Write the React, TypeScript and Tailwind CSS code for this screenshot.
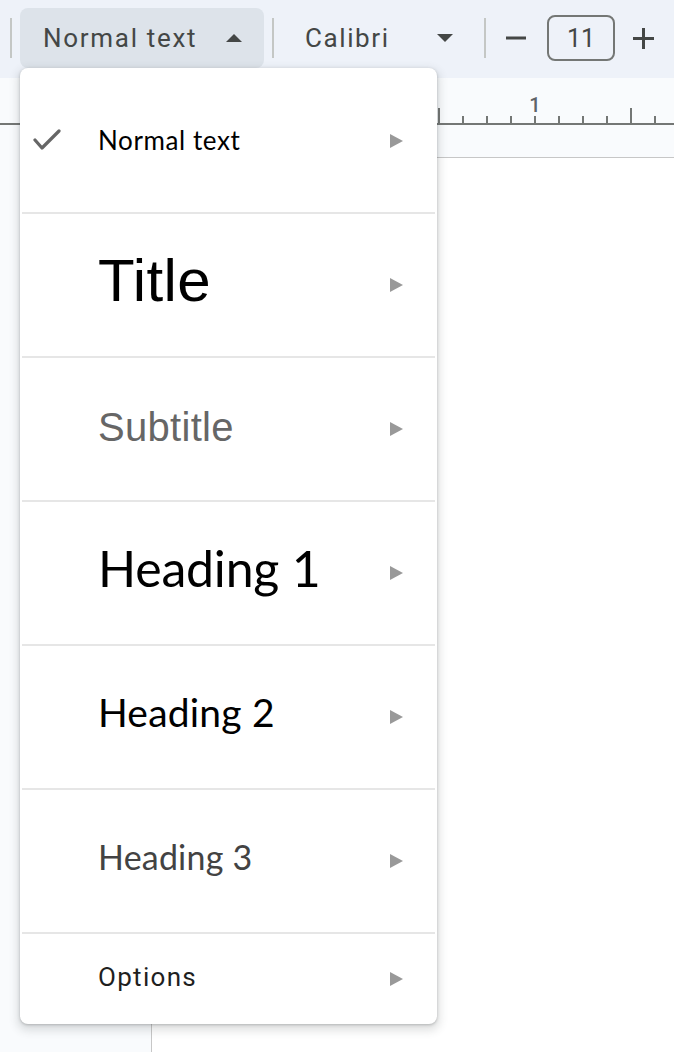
import React from "react";

const Arrow = () => (
  <svg width="13" height="14" viewBox="0 0 13 14" className="block">
    <polygon points="0,0 13,7 0,14" fill="#999999" />
  </svg>
);

const Check = () => (
  <svg width="28" height="24" viewBox="0 0 28 24" className="block" style={{ filter: "blur(0.6px)" }}>
    <polyline points="2,11 9,19 26,2" fill="none" stroke="#666666" strokeWidth="3.2" strokeLinecap="round" strokeLinejoin="round" />
  </svg>
);

const Divider = () => <div className="mx-[2px] h-[2px] bg-[#e6e6e6]" />;

type Item = {
  label: string;
  cls: string;
  check?: boolean;
};

const Row = ({ item, h }: { item: Item; h: string }) => (
  <div className={`flex items-center ${h}`}>
    <div className="w-[78px] pl-[13px] flex items-center">
      {item.check ? <Check /> : null}
    </div>
    <div className="flex-1 flex items-center">
      <span className={`whitespace-nowrap ${item.cls}`}>{item.label}</span>
    </div>
    <div className="pr-[34px]">
      <Arrow />
    </div>
  </div>
);

export default function App() {
  const ticks = [439, 463, 487, 511, 535, 559, 583, 607, 631, 655];
  const tall = [439, 631];
  return (
    <div className="relative w-[674px] h-[1052px] overflow-hidden bg-[#f9fbfd] font-['Roboto',sans-serif]">
      {/* Toolbar */}
      <div className="h-[78px] pb-[2px] bg-[#eef2f9] flex items-center pl-[10px]">
        <div className="w-[2px] h-[40px] bg-[#c4c7c5]" />
        <div className="ml-[8px] w-[244px] h-[60px] rounded-[8px] bg-[#dde3ea] flex items-center justify-between pl-[23px] pr-[22px]">
          <span className="text-[26px] leading-none tracking-[1.7px] text-[#444746]">Normal text</span>
          <svg width="16" height="8" viewBox="0 0 16 8" className="block">
            <polygon points="0,8 8,0 16,8" fill="#444746" />
          </svg>
        </div>
        <div className="ml-[8px] w-[2px] h-[40px] bg-[#c4c7c5]" />
        <div className="ml-[31px] w-[148px] flex items-center justify-between">
          <span className="text-[26px] leading-none tracking-[1.6px] text-[#444746]">Calibri</span>
          <svg width="16" height="8" viewBox="0 0 16 8" className="block">
            <polygon points="0,0 16,0 8,8" fill="#444746" />
          </svg>
        </div>
        <div className="ml-[31px] w-[2px] h-[40px] bg-[#c4c7c5]" />
        <svg width="20" height="4" viewBox="0 0 20 4" className="block ml-[20px]">
          <rect x="0" y="0.5" width="20" height="3" fill="#444746" />
        </svg>
        <div className="ml-[21px] w-[68px] h-[46px] rounded-[8px] border-2 border-[#747775] flex items-center justify-center">
          <span className="text-[25px] leading-none text-[#444746]">11</span>
        </div>
        <svg width="21" height="21" viewBox="0 0 21 21" className="block ml-[18px]">
          <rect x="0" y="9" width="21" height="3" fill="#444746" />
          <rect x="9" y="0" width="3" height="21" fill="#444746" />
        </svg>
      </div>

      {/* Ruler */}
      <div className="h-[79px]">
        <svg width="674" height="79" viewBox="0 0 674 79" className="block">
          <rect x="0" y="45" width="674" height="2" fill="#747775" />
          {ticks.map((t) => (
            <rect
              key={t}
              x={t - 1}
              y={tall.includes(t) ? 30 : 38}
              width="2"
              height={tall.includes(t) ? 17 : 9}
              fill="#747775"
            />
          ))}
          <text x="535" y="34" textAnchor="middle" fontSize="20" fontWeight="500" fill="#5f6368" fontFamily="Roboto, sans-serif">
            1
          </text>
        </svg>
      </div>

      {/* Document area */}
      <div className="flex h-[895px]">
        <div className="w-[151px]" />
        <div className="flex-1 bg-white border-l border-t border-[#c7c7c7]" />
      </div>

      {/* Dropdown menu */}
      <div className="absolute left-[20px] top-[68px] w-[417px] h-[956px] bg-white rounded-[8px] pt-[2px] flex flex-col shadow-[0_4px_8px_3px_rgba(60,64,67,0.15),0_1px_3px_rgba(60,64,67,0.3)]">
        <Row
          h="h-[142px]"
          item={{
            label: "Normal text",
            check: true,
            cls: "font-['Lato',sans-serif] text-[26px] leading-none tracking-[0.6px] text-black pb-[2px]",
          }}
        />
        <Divider />
        <Row
          h="h-[142px]"
          item={{
            label: "Title",
            cls: "font-['Liberation_Sans',Arial,sans-serif] text-[60px] leading-none tracking-[0.4px] text-black pb-[8px]",
          }}
        />
        <Divider />
        <Row
          h="h-[142px]"
          item={{
            label: "Subtitle",
            cls: "font-['Liberation_Sans',Arial,sans-serif] text-[40px] leading-none tracking-[0.3px] text-[#666666] pb-[4px]",
          }}
        />
        <Divider />
        <Row
          h="h-[142px]"
          item={{
            label: "Heading 1",
            cls: "font-['Lato',sans-serif] text-[50px] leading-none tracking-[-0.2px] text-black pb-[10px]",
          }}
        />
        <Divider />
        <Row
          h="h-[142px]"
          item={{
            label: "Heading 2",
            cls: "font-['Lato',sans-serif] text-[39px] leading-none tracking-[0.2px] text-black pb-[9px]",
          }}
        />
        <Divider />
        <Row
          h="h-[142px]"
          item={{
            label: "Heading 3",
            cls: "font-['Lato',sans-serif] text-[34px] leading-none tracking-[0.2px] text-[#434343] pb-[9px]",
          }}
        />
        <Divider />
        <Row
          h="h-[90px]"
          item={{
            label: "Options",
            cls: "text-[26px] leading-none tracking-[1.3px] text-[#1f1f1f] pb-[4px]",
          }}
        />
      </div>
    </div>
  );
}
